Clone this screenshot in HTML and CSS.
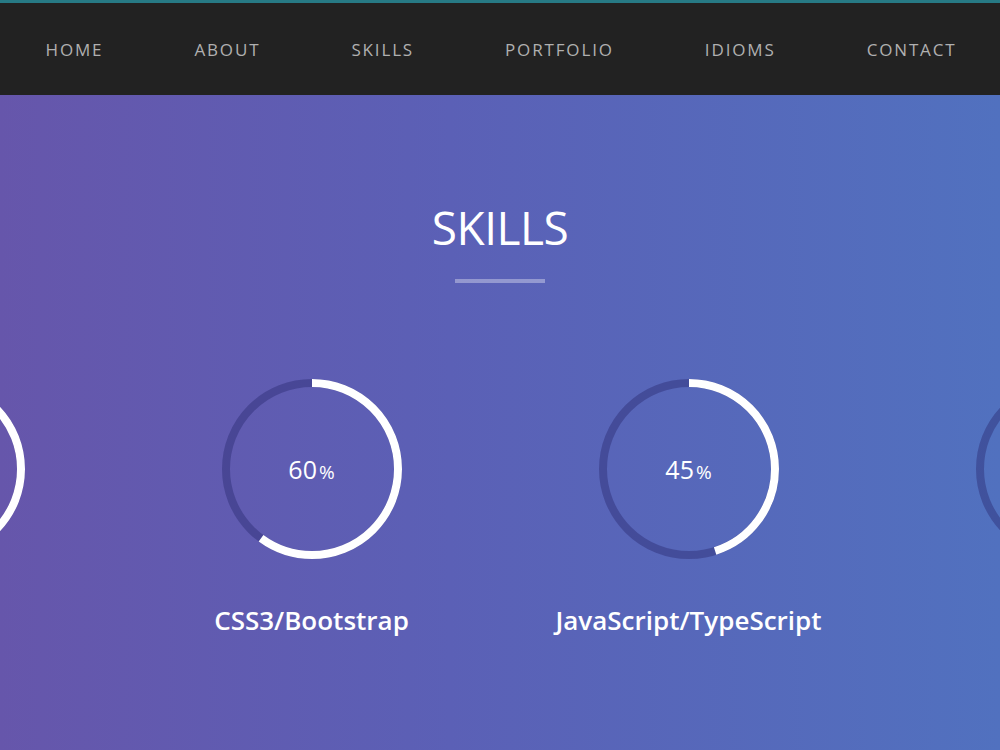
FILE: index.html
```html
<!DOCTYPE html>
<html lang="en">
<head>
  <meta charset="UTF-8" />
  <title>Portfolio - Skills</title>
  <link rel="stylesheet" href="styles.css">
</head>
<body>
  <div class="top-line"></div>
  <nav class="navbar">
    <ul class="nav-links">
      <li>Home</li>
      <li>About</li>
      <li>Skills</li>
      <li>Portfolio</li>
      <li>Idioms</li>
      <li>Contact</li>
    </ul>
  </nav>

  <section class="skills">
    <h2 class="section-title">Skills</h2>
    <div class="title-bar"></div>

    <div class="carousel">
      <div class="skill">
        <div class="ring">
          <svg viewBox="0 0 180 180" width="180" height="180">
            <circle class="track" cx="90" cy="90" r="86" />
            <circle class="progress" cx="90" cy="90" r="86" stroke-dasharray="540.35" stroke-dashoffset="81.05" />
          </svg>
          <span class="percent">85<small>%</small></span>
        </div>
        <h3 class="skill-name">HTML5</h3>
      </div>
      <div class="skill">
        <div class="ring">
          <svg viewBox="0 0 180 180" width="180" height="180">
            <circle class="track" cx="90" cy="90" r="86" />
            <circle class="progress" cx="90" cy="90" r="86" stroke-dasharray="540.35" stroke-dashoffset="216.14" />
          </svg>
          <span class="percent">60<small>%</small></span>
        </div>
        <h3 class="skill-name">CSS3/Bootstrap</h3>
      </div>
      <div class="skill">
        <div class="ring">
          <svg viewBox="0 0 180 180" width="180" height="180">
            <circle class="track" cx="90" cy="90" r="86" />
            <circle class="progress" cx="90" cy="90" r="86" stroke-dasharray="540.35" stroke-dashoffset="297.19" />
          </svg>
          <span class="percent">45<small>%</small></span>
        </div>
        <h3 class="skill-name">JavaScript/TypeScript</h3>
      </div>
      <div class="skill">
        <div class="ring">
          <svg viewBox="0 0 180 180" width="180" height="180">
            <circle class="track" cx="90" cy="90" r="86" />
            <circle class="progress" cx="90" cy="90" r="86" stroke-dasharray="540.35" stroke-dashoffset="378.25" />
          </svg>
          <span class="percent">30<small>%</small></span>
        </div>
        <h3 class="skill-name">Angular</h3>
      </div>
    </div>
  </section>
</body>
</html>
```

FILE: styles.css
```css
html, body {
  margin: 0;
  padding: 0;
  height: 100%;
  overflow: hidden;
  font-family: 'Open Sans', sans-serif;
  color: #fff;
  background: #222;
}

.top-line {
  height: 3px;
  background: #277a85;
}

.navbar {
  height: 92px;
  background: #222;
  display: flex;
  align-items: center;
}

.nav-links {
  list-style: none;
  margin: 0;
  padding: 0;
  display: flex;
}

.nav-links li {
  padding: 0 45.5px;
  font-size: 17px;
  letter-spacing: 1.85px;
  text-transform: uppercase;
  color: #b0b0b0;
}

.skills {
  height: calc(100% - 95px);
  padding-top: 103px;
  box-sizing: border-box;
  background: linear-gradient(to right, #6656ab 0%, #5b60b6 45%, #5171bf 100%);
  text-align: center;
}

.section-title {
  margin: 0;
  font-size: 46px;
  line-height: 58px;
  font-weight: 400;
  letter-spacing: -0.5px;
  text-transform: uppercase;
}

.title-bar {
  width: 90px;
  height: 4px;
  margin: 23px auto 0;
  background: rgba(255, 255, 255, 0.35);
}

.carousel {
  display: flex;
  justify-content: center;
  margin-top: 96px;
}

.skill {
  flex: 0 0 377px;
  display: flex;
  flex-direction: column;
  align-items: center;
}

.ring {
  display: grid;
  place-items: center;
  width: 180px;
  height: 180px;
}

.ring svg,
.ring .percent {
  grid-area: 1 / 1;
}

.ring svg {
  transform: rotate(-90deg);
}

.ring circle {
  fill: none;
  stroke-width: 8;
}

.track {
  stroke: rgba(45, 45, 115, 0.45);
}

.progress {
  stroke: #fff;
}

.percent {
  font-size: 25px;
  font-weight: 400;
  line-height: 1;
}

.percent small {
  font-size: 19px;
  margin-left: 2px;
}

.skill-name {
  margin: 44px 0 0;
  font-size: 26px;
  line-height: 34px;
  font-weight: 600;
}
```
